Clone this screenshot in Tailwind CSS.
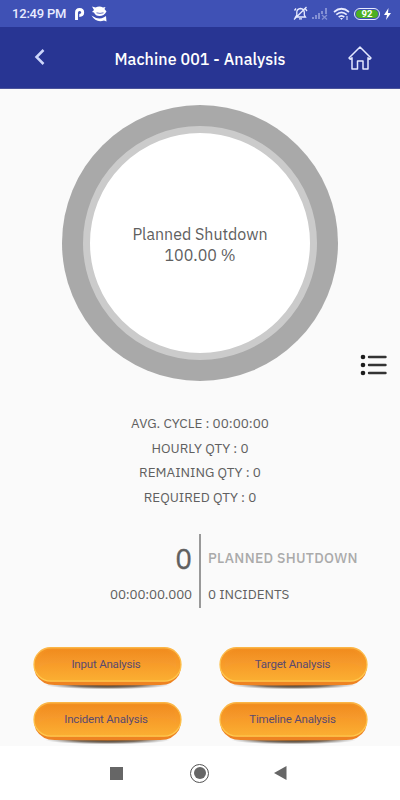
<!DOCTYPE html>
<html lang="en">
<head>
<meta charset="utf-8">
<title>Machine 001 - Analysis</title>
<script src="https://cdn.jsdelivr.net/npm/@tailwindcss/browser@4"></script>
</head>
<body class="w-[400px] h-[800px] overflow-hidden bg-[#fafafa] font-['IBM_Plex_Sans','Roboto',sans-serif] text-[#606060] flex flex-col">
<svg class="absolute w-0 h-0">
  <defs>
    <linearGradient id="face" x1="0" y1="0" x2="0" y2="1"><stop offset="0" stop-color="#f28f20"/><stop offset=".45" stop-color="#f79a28"/><stop offset="1" stop-color="#fbaf32"/></linearGradient>
    <linearGradient id="gloss" x1="0" y1="0" x2="0" y2="1"><stop offset="0" stop-color="#f08a1c"/><stop offset="1" stop-color="#f7a035"/></linearGradient>
    <linearGradient id="rim" x1="0" y1="0" x2="0" y2="1"><stop offset="0" stop-color="#fbb545"/><stop offset="1" stop-color="#ffcb50"/></linearGradient>
    <radialGradient id="shade"><stop offset="0" stop-color="#3a2a18"/><stop offset=".55" stop-color="#5c4c3c" stop-opacity=".8"/><stop offset="1" stop-color="#777" stop-opacity="0"/></radialGradient>
    <symbol id="pill" viewBox="0 0 150 44">
      <ellipse cx="75" cy="38" rx="63" ry="4.600" fill="url(#shade)"/>
      <path d="M1 18Q1 24 3 28Q9 38 22 38.200Q75 39 128 38.200Q141 38 147 28Q149 24 149 18Z" fill="#ee8322"/>
      <rect x="1" y=".6" width="148" height="33.600" rx="16.800" fill="url(#face)" stroke="url(#rim)" stroke-width="1.300"/>
      <path d="M6 18Q6 2.500 20 2.500H130Q144 2.500 144 18V21Q138 16 128 16H22Q12 16 6 21Z" fill="url(#gloss)" opacity=".65"/>
    </symbol>
  </defs>
</svg>

<div class="h-[27px] bg-[#3f51b5] flex items-center justify-between pl-[12px] pr-[9px] text-[#e8ebff] shrink-0">
  <div class="flex items-center">
    <span class="font-['Roboto',sans-serif] font-medium text-[13px] leading-none tracking-[-0.200px] w-[54px] whitespace-nowrap">12:49 PM</span>
    <svg class="ml-[8px]" width="11" height="14" viewBox="0 0 11 14"><path d="M2.500 13V5.700Q2.500 2.500 5.600 2.500T8.700 5.600Q8.700 8.500 5.300 8.500" fill="none" stroke="#fff" stroke-width="2.900"/></svg>
    <svg class="ml-[6px]" width="17" height="16" viewBox="0 0 17 16"><path d="M1 .5L4.500 1.500Q8.500-.5 12 1.500L14.500 1L13.500 3L15.500 5.500Q13 10 8.500 10Q4.500 10 3 6.500L1 6L3 4Z" fill="#fff"/><path d="M5.500 6.800Q9 8 12.500 6.800" fill="none" stroke="#4051b5" stroke-width=".8"/><path d="M.5 9.500Q7.500 14.500 13 11.200L15 10L15.500 15.500L13 14.500Q5 17 .5 9.500" fill="#fff"/></svg>
  </div>
  <div class="flex items-center">
    <svg width="15" height="15" viewBox="0 0 15 15" fill="none" stroke="currentColor" stroke-width="1.300"><path d="M2.500 11H12.500L11.300 9V6Q11 3 7.500 2.500Q4 3 3.800 6V9ZM6 12.800H9M1 13.500L13.500 1M1.500 4.500L3 2.500M12.500 3L14 5"/></svg>
    <svg class="ml-[4px]" width="16" height="13" viewBox="0 0 16 13" fill="#8490d4"><path d="M0 10h2v2H0zM3 8h2v4H3zM6 6h2v6H6zM9 4h2v3H9zM13 1h2v6h-2z"/><path d="M10 8L15 12.500M15 8L10 12.500" stroke="#8490d4" stroke-width="1.300"/></svg>
    <svg class="ml-[5px]" width="17" height="14" viewBox="0 0 17 14" fill="none" stroke="currentColor" stroke-width="1.700"><path d="M1 5Q8.500-1.500 16 5M3.300 7.700Q8.500 3 13.700 7.700M5.700 10.200Q8.500 7.500 11.300 10.200"/><path d="M7 11L8.500 13L10 11Z" fill="currentColor" stroke="none"/><path d="M14 9v4" stroke-width="1"/></svg>
    <div class="ml-[4px] w-[26px] h-[12px] rounded-full border border-[#e8ebff] p-[1px]"><div class="h-full rounded-full bg-[#4caf22] text-white font-['Roboto',sans-serif] font-bold text-[9.500px] leading-[8px] text-center">92</div></div>
    <svg class="ml-[4px]" width="7" height="12" viewBox="0 0 7 12"><path d="M4.500 0L0 7H3L2 12L7 5H4Z" fill="#fff"/></svg>
  </div>
</div>

<header class="h-[62px] bg-[#283593] border-b border-[#4b549b] flex items-center justify-between pl-[33px] pr-[27px] shrink-0 text-white">
  <svg width="13" height="18" viewBox="0 0 13 18" class="mb-[2px]"><path d="M10.500 2L3.500 9L10.500 16" fill="none" stroke="#cdd6fb" stroke-width="2.500"/></svg>
  <h1 class="ml-[7px] w-[174px] text-center whitespace-nowrap text-[16px] font-medium tracking-[0.080px] pt-[3px]">Machine 001 - Analysis</h1>
  <svg width="26" height="26" viewBox="0 0 26 26" fill="none" stroke="#e3e8ff" stroke-width="1.500" stroke-linejoin="round"><path d="M2 13L13 2L24 13L22.800 14.300L21 12.700V24H16V16H10.500V24H5V12.700L3.200 14.300Z"/></svg>
</header>

<main class="h-[657px] shrink-0 relative flex flex-col items-center overflow-hidden">
  <div class="mt-[16px] size-[276px] shrink-0 rounded-full bg-[#a9a9a9] flex items-center justify-center">
    <div class="size-[234px] rounded-full border-[7px] border-[#cbcbcb] bg-white flex flex-col items-center justify-center text-[16px] leading-[21px] whitespace-nowrap pt-[3px]">
      <p>Planned Shutdown</p>
      <p>100.00 %</p>
    </div>
  </div>
  <svg class="absolute left-[360px] top-[265px]" width="28" height="22" viewBox="0 0 28 22"><g fill="#1c1c1c"><circle cx="3" cy="3" r="2.300"/><circle cx="3" cy="11" r="2.300"/><circle cx="3" cy="19" r="2.300"/></g><path d="M9 3H25.500M9 11H25.500M9 19H25.500" stroke="#333" stroke-width="2.400" stroke-linecap="round"/></svg>

  <div class="mt-[30px] flex flex-col items-center text-[13.480px] leading-[24.700px] whitespace-nowrap">
    <p>AVG. CYCLE : 00:00:00</p>
    <p>HOURLY QTY : 0</p>
    <p>REMAINING QTY : 0</p>
    <p>REQUIRED QTY : 0</p>
  </div>

  <div class="mt-[24px] h-[74px] w-full grid grid-cols-[199px_2px_199px] whitespace-nowrap">
    <div class="flex flex-col items-end pr-[7px]">
      <p class="text-[28px] leading-[50px] h-[48px] [-webkit-text-stroke:0.3px_#606060]">0</p>
      <p class="text-[13.400px] tracking-[-0.150px] leading-[24px]">00:00:00.000</p>
    </div>
    <div class="bg-[#999]"></div>
    <div class="flex flex-col items-start pl-[7px]">
      <p class="text-[14px] tracking-[0.300px] leading-[49px] h-[48px] font-medium text-[#aaa]">PLANNED SHUTDOWN</p>
      <p class="text-[13.400px] leading-[24px]">0 INCIDENTS</p>
    </div>
  </div>

  <div class="mt-[39px] w-full px-[32.500px] grid grid-cols-[149px_149px] gap-x-[37.500px] gap-y-[11px] font-['Roboto',sans-serif] text-[11.500px] tracking-[-0.200px] leading-[35px] text-[#5a4a70] text-center">
    <button class="h-[44px] grid *:col-start-1 *:row-start-1"><svg width="149" height="44"><use href="#pill"/></svg><span class="-ml-[2px]">Input Analysis</span></button>
    <button class="h-[44px] grid *:col-start-1 *:row-start-1"><svg width="149" height="44"><use href="#pill"/></svg><span class="-ml-[2px]">Target Analysis</span></button>
    <button class="h-[44px] grid *:col-start-1 *:row-start-1"><svg width="149" height="44"><use href="#pill"/></svg><span class="-ml-[2px]">Incident Analysis</span></button>
    <button class="h-[44px] grid *:col-start-1 *:row-start-1"><svg width="149" height="44"><use href="#pill"/></svg><span class="-ml-[2px]">Timeline Analysis</span></button>
  </div>
</main>

<nav class="h-[54px] bg-white flex items-center pl-[110px] shrink-0">
  <div class="size-[13px] bg-[#666]"></div>
  <div class="ml-[67px] size-[19px] rounded-full border border-[#555] p-[2.500px]"><div class="size-full rounded-full bg-[#666]"></div></div>
  <svg class="ml-[65px]" width="13" height="14" viewBox="0 0 13 14"><path d="M0 7L12.500 0V14Z" fill="#666"/></svg>
</nav>
</body>
</html>
